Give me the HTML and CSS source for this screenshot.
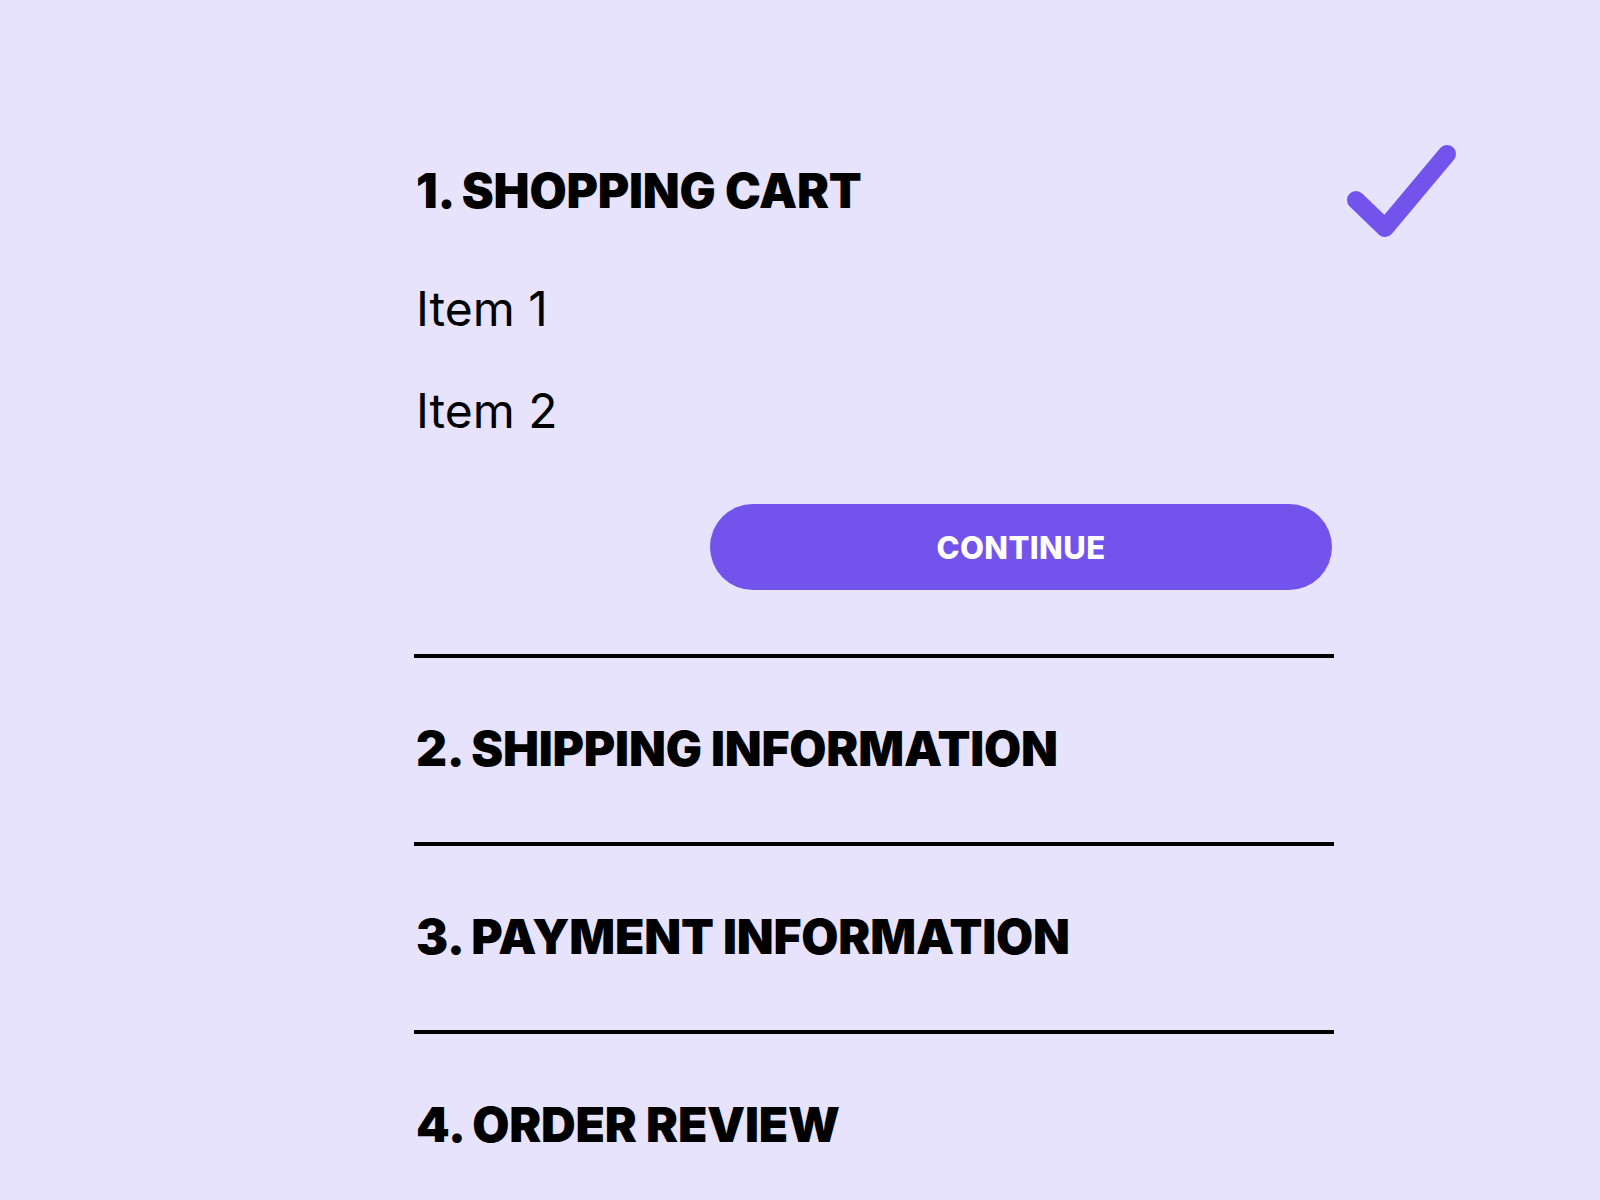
FILE: index.html
```html
<!DOCTYPE html>
<html lang="en">
<head>
<meta charset="utf-8">
<title>Checkout</title>
<link rel="stylesheet" href="styles.css">
</head>
<body>
<main class="checkout">
  <section class="step step-open">
    <div class="step-header">
      <h2 class="step-title">1. SHOPPING CART</h2>
      <svg class="step-check" viewBox="0 0 120 100" width="120" height="100" aria-hidden="true">
        <polyline points="16,59 45,87 107,13" fill="none" stroke="#7254ec" stroke-width="18" stroke-linecap="round" stroke-linejoin="round"/>
      </svg>
    </div>
    <ul class="cart-items">
      <li class="cart-item">Item 1</li>
      <li class="cart-item">Item 2</li>
    </ul>
    <div class="step-actions">
      <button class="btn-continue" type="button">CONTINUE</button>
    </div>
  </section>
  <section class="step">
    <h2 class="step-title">2. SHIPPING INFORMATION</h2>
  </section>
  <section class="step">
    <h2 class="step-title">3. PAYMENT INFORMATION</h2>
  </section>
  <section class="step step-last">
    <h2 class="step-title">4. ORDER REVIEW</h2>
  </section>
</main>
</body>
</html>
```

FILE: styles.css
```css
html, body {
  margin: 0;
  padding: 0;
}
body {
  background: #e7e3fc;
  color: #000;
  font-family: Inter, "Noto Sans", "Liberation Sans", sans-serif;
  min-height: 1200px;
}
.checkout {
  width: 920px;
  padding: 162px 0 0 414px;
  box-sizing: content-box;
}
.step {
  border-bottom: 4px solid #000;
  padding: 62px 0 64px;
}
.step-open {
  padding-top: 0;
  padding-bottom: 64px;
}
.step-last {
  border-bottom: none;
}
.step-header {
  position: relative;
  display: flex;
  align-items: center;
}
.step-title {
  margin: 0;
  padding-left: 2px;
  font-size: 48px;
  line-height: 58px;
  font-weight: 900;
  letter-spacing: -0.2px;
}
.step-check {
  position: absolute;
  left: 926px;
  top: -21px;
}
.cart-items {
  list-style: none;
  margin: 60px 0 0;
  padding: 0 0 0 2px;
  display: flex;
  flex-direction: column;
  gap: 44px;
}
.cart-item {
  font-size: 48px;
  line-height: 58px;
  font-weight: 400;
}
.step-actions {
  display: flex;
  justify-content: flex-end;
  margin-top: 64px;
}
.btn-continue {
  width: 622px;
  height: 86px;
  margin-right: 2px;
  border: none;
  border-radius: 43px;
  background: #7254ec;
  color: #fff;
  font-family: Inter, "Noto Sans", "Liberation Sans", sans-serif;
  font-size: 31px;
  font-weight: 800;
  letter-spacing: 0.4px;
  padding: 0;
  cursor: pointer;
}
```
